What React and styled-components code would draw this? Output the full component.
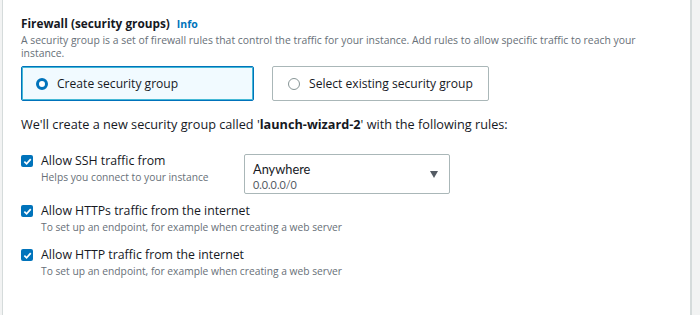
import React from 'react'
import styled, { createGlobalStyle } from 'styled-components'

const Global = createGlobalStyle`
  html, body {
    margin: 0;
    padding: 0;
    background: #f2f3f3;
    font-family: "Open Sans", "Liberation Sans", sans-serif;
  }
`;

const Page = styled.div`
  width: 700px;
  height: 315px;
  overflow: hidden;
  display: flex;
  background: #f2f3f3;
`;

const Panel = styled.section`
  margin-left: 2px;
  width: 690px;
  background: #fff;
  border-left: 1px solid #d5dbdb;
  border-right: 2px solid #d5dbdb;
  padding: 14px 0 0 18px;
  box-sizing: border-box;
  color: #16191f;
`;

const Title = styled.h2`
  margin: 0;
  font-size: 11.8px;
  font-weight: 700;
  line-height: 18px;
  display: flex;
  align-items: baseline;
  gap: 7px;
`;

const Info = styled.span`
  color: #0073bb;
  font-size: 10.5px;
  font-weight: 700;
`;

const Desc = styled.p`
  margin: 1px 0 0;
  font-size: 10.4px;
  line-height: 12.5px;
  color: #687078;
  width: 640px;
`;

const Tiles = styled.div`
  display: flex;
  gap: 18px;
  margin-top: 7px;
`;

const Tile = styled.div`
  width: ${p => p.$w}px;
  height: 35px;
  box-sizing: border-box;
  border: 1px solid ${p => (p.$on ? '#0073bb' : '#aab7b8')};
  box-shadow: ${p => (p.$on ? 'inset 0 0 0 1px #44b9d6' : 'none')};
  background: ${p => (p.$on ? '#f1faff' : '#fff')};
  border-radius: 2px;
  display: flex;
  align-items: center;
  padding-left: ${p => p.$pad}px;
  gap: 9px;
  font-size: 12.1px;
`;

const Radio = styled.span`
  width: 12px;
  height: 12px;
  box-sizing: border-box;
  border-radius: 50%;
  border: ${p => (p.$on ? '3.5px solid #0073bb' : '1px solid #879596')};
  background: #fff;
`;

const Note = styled.p`
  margin: 15px 0 0;
  font-size: 12.7px;
  line-height: 16px;
  b { font-weight: 700; }
`;

const Rules = styled.div`
  margin-top: 20px;
  display: flex;
  flex-direction: column;
  gap: 12px;
`;

const Rule = styled.div`
  display: flex;
  align-items: flex-start;
`;

const Box = styled.span`
  width: 12px;
  height: 12px;
  margin-top: 3px;
  border-radius: 2px;
  background: #0073bb;
  display: flex;
  align-items: center;
  justify-content: center;
  flex-shrink: 0;
`;

const RuleText = styled.div`
  margin-left: 8px;
  width: ${p => (p.$w ? p.$w + 'px' : 'auto')};
`;

const Label = styled.div`
  font-size: 12.3px;
  line-height: 17px;
`;

const Hint = styled.div`
  font-size: 10.25px;
  line-height: 14px;
  color: #687078;
  margin-top: 1px;
`;

const Select = styled.div`
  margin: 2px 0 -4px;
  width: 206px;
  height: 40px;
  box-sizing: border-box;
  border: 1px solid #aab7b8;
  border-radius: 2px;
  padding: 0 11px 0 8px;
  display: flex;
  align-items: center;
  justify-content: space-between;
`;

const SelectText = styled.div`
  font-family: Lato, "Open Sans", sans-serif;
  margin-top: 5px;
  div:first-child { font-size: 12.8px; line-height: 15px; }
  div:last-child { font-size: 10.8px; line-height: 15px; color: #545b64; }
`;

const Caret = styled.span`
  width: 0;
  height: 0;
  border-left: 4.5px solid transparent;
  border-right: 4.5px solid transparent;
  border-top: 7px solid #545b64;
`;

const Check = () => (
  <Box>
    <svg width="9" height="9" viewBox="0 0 10 10">
      <path d="M1.5 5.2 L4 7.6 L8.6 2.4" fill="none" stroke="#fff" strokeWidth="1.9" />
    </svg>
  </Box>
);

export default function App() {
  return (
    <Page>
      <Global />
      <Panel>
        <Title>Firewall (security groups) <Info>Info</Info></Title>
        <Desc>
          A security group is a set of firewall rules that control the traffic for your instance. Add rules to allow specific traffic to reach your instance.
        </Desc>
        <Tiles>
          <Tile $on $w={233} $pad={14}><Radio $on />Create security group</Tile>
          <Tile $w={217} $pad={15}><Radio />Select existing security group</Tile>
        </Tiles>
        <Note>We'll create a new security group called '<b>launch-wizard-2</b>' with the following rules:</Note>
        <Rules>
          <Rule>
            <Check />
            <RuleText $w={203}>
              <Label>Allow SSH traffic from</Label>
              <Hint>Helps you connect to your instance</Hint>
            </RuleText>
            <Select>
              <SelectText>
                <div>Anywhere</div>
                <div>0.0.0.0/0</div>
              </SelectText>
              <Caret />
            </Select>
          </Rule>
          <Rule>
            <Check />
            <RuleText>
              <Label>Allow HTTPs traffic from the internet</Label>
              <Hint>To set up an endpoint, for example when creating a web server</Hint>
            </RuleText>
          </Rule>
          <Rule>
            <Check />
            <RuleText>
              <Label>Allow HTTP traffic from the internet</Label>
              <Hint>To set up an endpoint, for example when creating a web server</Hint>
            </RuleText>
          </Rule>
        </Rules>
      </Panel>
    </Page>
  );
}
